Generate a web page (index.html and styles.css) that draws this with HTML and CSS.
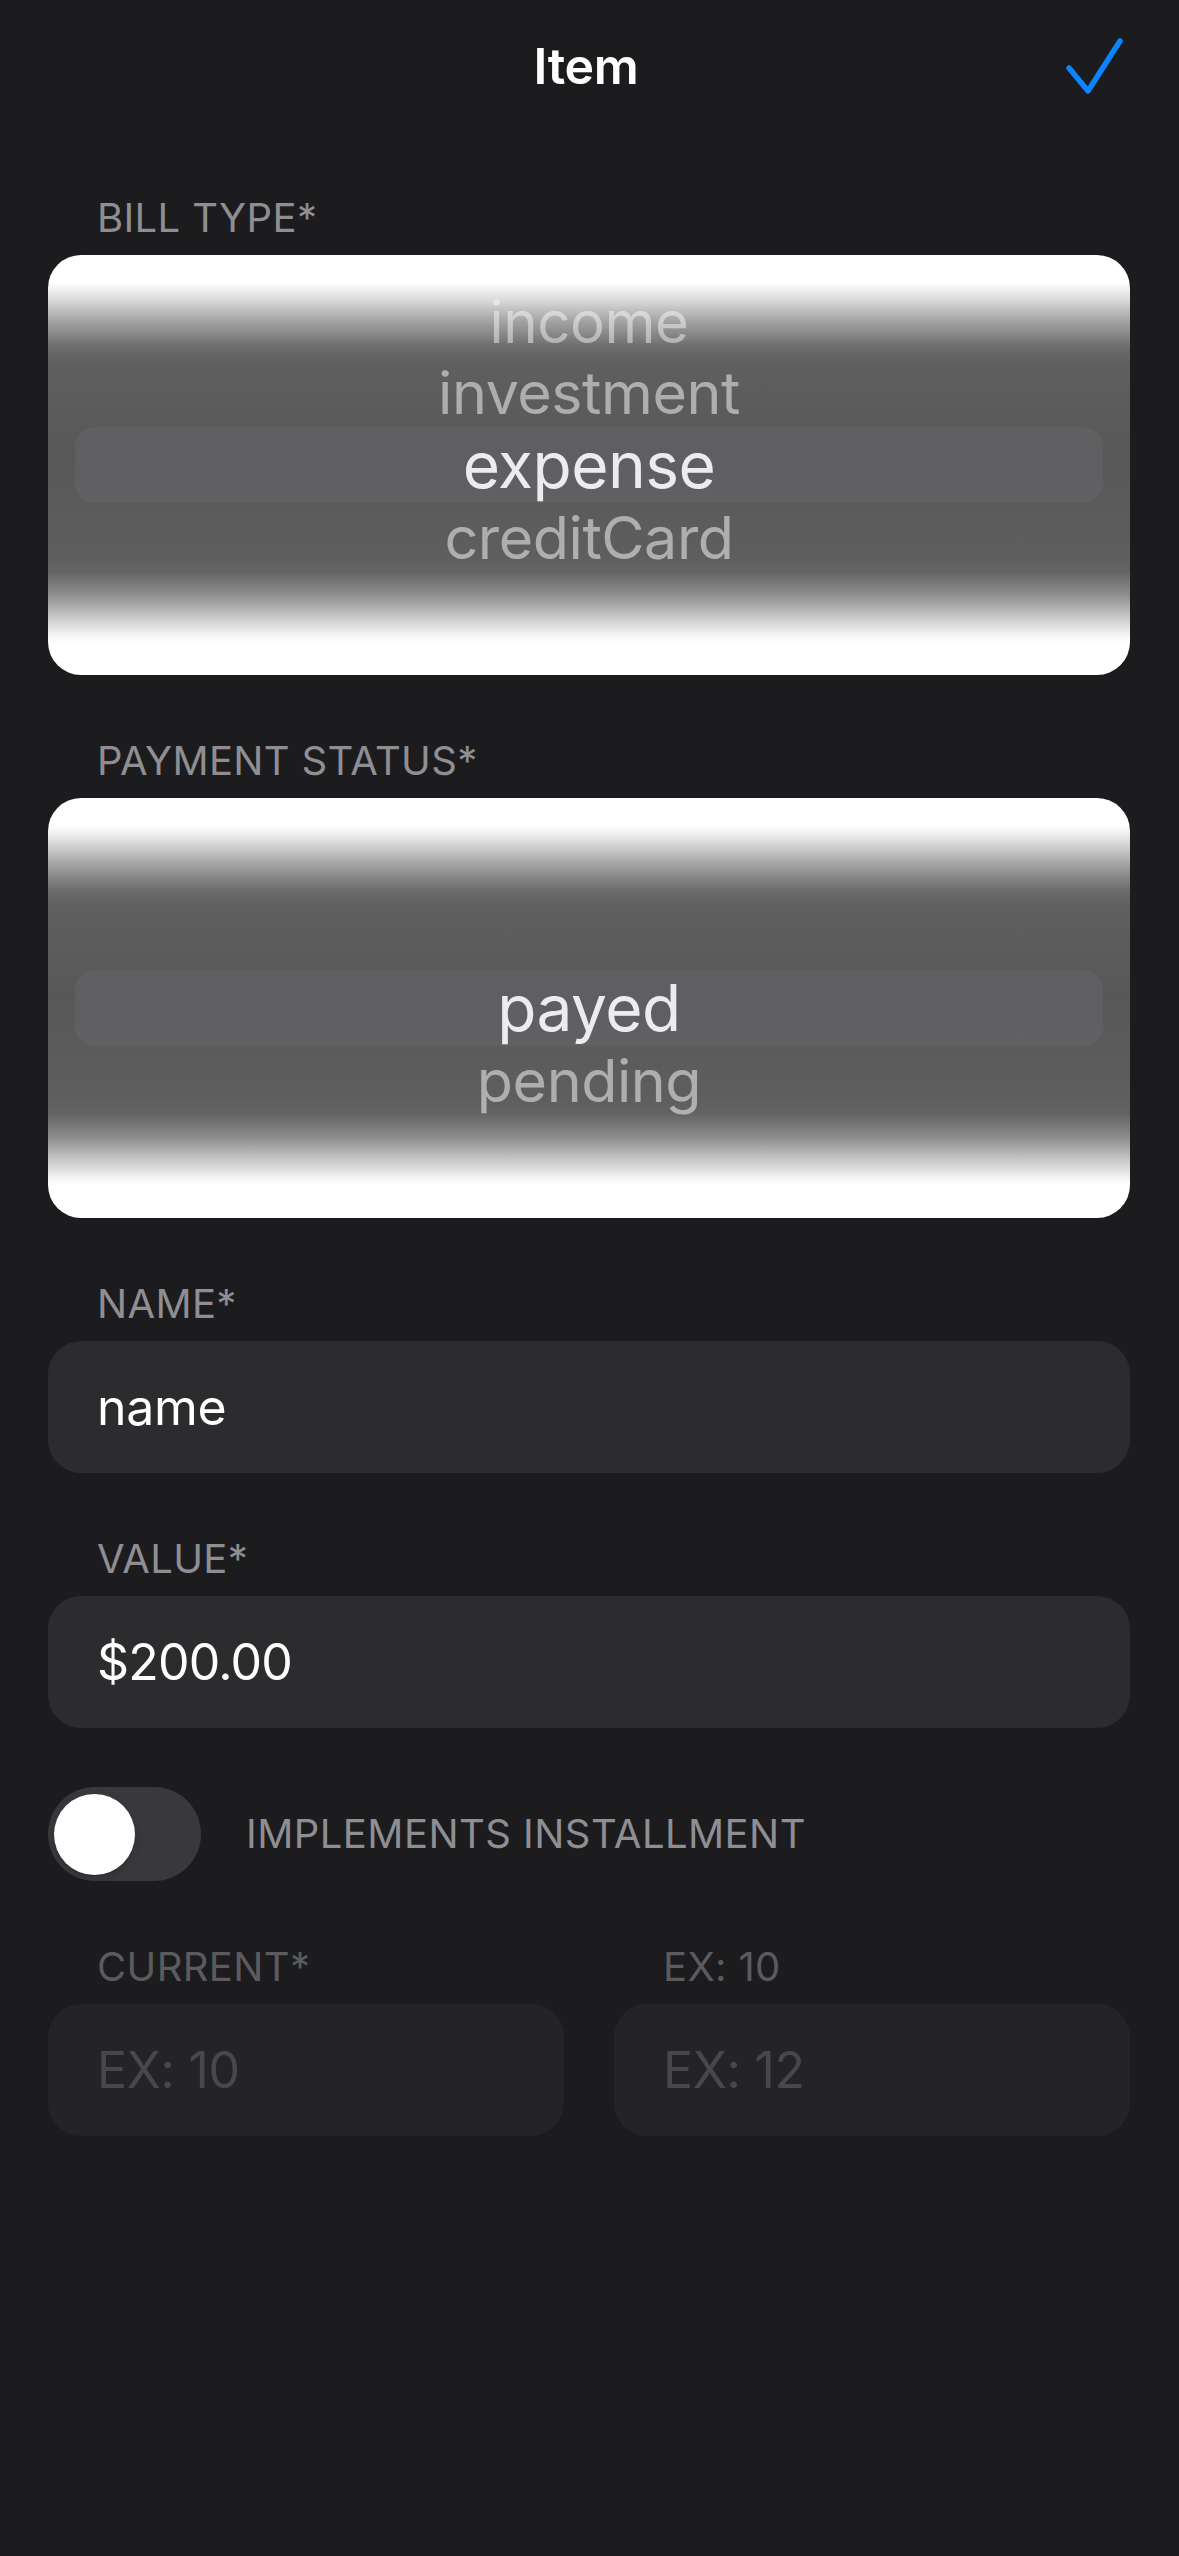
FILE: index.html
```html
<!DOCTYPE html>
<html lang="en">
<head>
<meta charset="utf-8">
<title>Item</title>
<link rel="stylesheet" href="styles.css">
</head>
<body>
<div class="screen">
  <header class="navbar">
    <span class="nav-spacer"></span>
    <h1 class="nav-title">Item</h1>
    <button class="nav-done" aria-label="Done">
      <svg width="60" height="60" viewBox="0 0 60 60" fill="none">
        <path d="M5 32 L24 55 L56 5" stroke="#0a84ff" stroke-width="5.5" stroke-linecap="round" stroke-linejoin="round"/>
      </svg>
    </button>
  </header>

  <main class="form">
    <section class="group">
      <div class="label">BILL TYPE*</div>
      <div class="picker">
        <div class="row row-far">income</div>
        <div class="row row-near">investment</div>
        <div class="row row-selected">expense</div>
        <div class="row row-below">creditCard</div>
      </div>
    </section>

    <section class="group">
      <div class="label">PAYMENT STATUS*</div>
      <div class="picker">
        <div class="row row-far"></div>
        <div class="row row-near"></div>
        <div class="row row-selected">payed</div>
        <div class="row row-below">pending</div>
      </div>
    </section>

    <section class="group">
      <div class="label">NAME*</div>
      <div class="field">name</div>
    </section>

    <section class="group">
      <div class="label">VALUE*</div>
      <div class="field field-value">$200.00</div>
    </section>

    <section class="toggle-row">
      <div class="switch"><span class="knob"></span></div>
      <span class="toggle-label">IMPLEMENTS INSTALLMENT</span>
    </section>

    <section class="group installments">
      <div class="inst-col">
        <div class="label label-dim">CURRENT*</div>
        <div class="field field-dim">EX: 10</div>
      </div>
      <div class="inst-col">
        <div class="label label-dim">EX: 10</div>
        <div class="field field-dim">EX: 12</div>
      </div>
    </section>
  </main>
</div>
</body>
</html>
```

FILE: styles.css
```css
* { box-sizing: border-box; }

html, body {
  margin: 0;
  padding: 0;
  background: #1c1c1e;
}

body {
  font-family: Inter, "Noto Sans", "Liberation Sans", sans-serif;
  color: #ffffff;
  min-height: 100vh;
}

.screen {
  width: 1179px;
  min-height: 2556px;
  background: #1c1c1e;
}

.navbar {
  display: grid;
  grid-template-columns: 1fr auto 1fr;
  align-items: center;
  height: 132px;
  padding: 36px 55px 36px 48px;
}

.nav-title {
  margin: 0;
  font-size: 50px;
  line-height: 60px;
  font-weight: 600;
  color: #ffffff;
  letter-spacing: -0.3px;
}

.nav-done {
  justify-self: end;
  background: none;
  border: 0;
  padding: 0;
  width: 60px;
  height: 60px;
  display: block;
}

.nav-done svg { display: block; }

.form {
  padding: 0 49px 0 48px;
}

.group {
  margin-top: 62px;
}

.label {
  padding-left: 49px;
  font-size: 40px;
  line-height: 48px;
  color: #8e8e93;
  margin-bottom: 13px;
  letter-spacing: 0.35px;
}

.label-dim { color: #5b5b5f; }

.picker {
  height: 420px;
  border-radius: 33px;
  overflow: hidden;
  padding-top: 28px;
  display: flex;
  flex-direction: column;
  background: linear-gradient(to bottom,
    #ffffff 0px,
    #ffffff 28px,
    #dcdcdc 44px,
    #a4a4a4 66px,
    #6c6c6c 92px,
    #5f5f5f 108px,
    #585858 200px,
    #5e5e5e 300px,
    #636363 316px,
    #8e8e8e 340px,
    #c8c8c8 362px,
    #f4f4f4 380px,
    #ffffff 388px,
    #ffffff 420px);
}

.row {
  text-align: center;
  font-size: 64px;
  color: rgba(255, 255, 255, 0.5);
  letter-spacing: -0.5px;
  white-space: nowrap;
}

.row-far, .row-near {
  height: 72px;
  line-height: 72px;
}

.row-far {
  color: rgba(255, 255, 255, 0.45);
  transform: translateY(3px) scale(0.91, 0.9);
}

.row-near {
  transform: translateY(2px) scale(0.925, 0.9);
}

.row-selected {
  height: 76px;
  line-height: 76px;
  margin: 0 27px;
  border-radius: 20px;
  background: rgba(118, 118, 128, 0.24);
  color: #ececf0;
}

.row-below {
  height: 64px;
  line-height: 64px;
  transform: translateY(3px) scale(0.925, 0.92);
}

.field {
  height: 132px;
  border-radius: 33px;
  background: #2c2c2e;
  padding-left: 49px;
  font-size: 50px;
  line-height: 132px;
  color: #ffffff;
  letter-spacing: -0.3px;
}

.field-value { letter-spacing: -0.8px; }

.field-dim {
  background: #242426;
  color: #48484b;
}

.toggle-row {
  margin-top: 59px;
  display: flex;
  align-items: center;
  gap: 45px;
}

.switch {
  width: 153px;
  height: 94px;
  border-radius: 47px;
  background: #39393d;
  padding: 6px;
  display: flex;
  align-items: center;
}

.knob {
  width: 81px;
  height: 81px;
  border-radius: 50%;
  background: #ffffff;
  box-shadow: 0 3px 8px rgba(0, 0, 0, 0.15), 0 1px 1px rgba(0, 0, 0, 0.16);
}

.toggle-label {
  font-size: 40px;
  line-height: 48px;
  color: #8e8e93;
  letter-spacing: 0.45px;
}

.installments {
  display: grid;
  grid-template-columns: 1fr 1fr;
  column-gap: 50px;
}
```
